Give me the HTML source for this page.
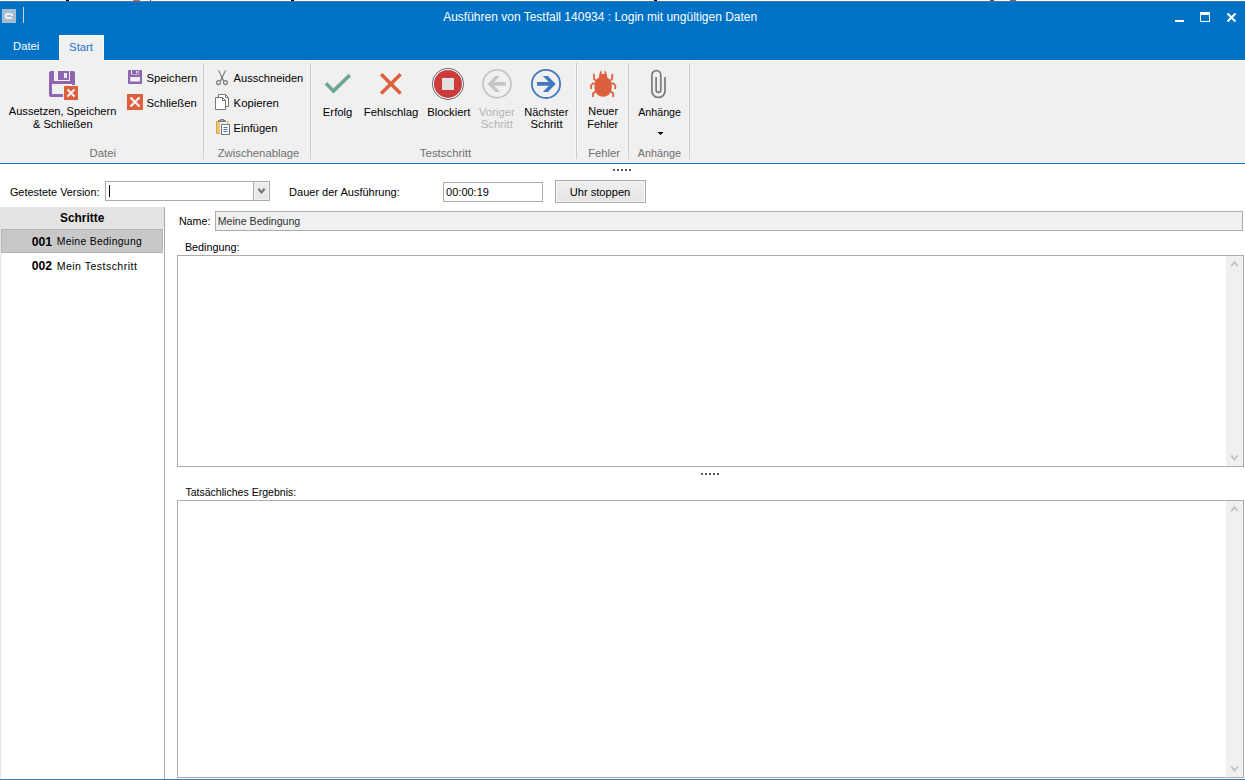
<!DOCTYPE html>
<html><head><meta charset="utf-8">
<style>
html,body{margin:0;padding:0;width:1245px;height:780px;overflow:hidden;background:#fff;}
body{position:relative;font-family:"Liberation Sans",sans-serif;}
.t{position:absolute;white-space:nowrap;}
.r{position:absolute;box-sizing:border-box;}
svg.full{position:absolute;left:0;top:0;overflow:visible;}
</style></head><body>
<div class="r" style="left:0px;top:0px;width:1245px;height:1px;background:#FFFCF6"></div>
<div class="r" style="left:0px;top:1px;width:1245px;height:59px;background:#0072C6"></div>
<div class="r" style="left:0px;top:1px;width:1245px;height:1px;background:#3D77B3"></div>
<div class="r" style="left:66px;top:0px;width:3px;height:1px;background:#000"></div>
<div class="r" style="left:133px;top:0px;width:7px;height:1px;background:#E0603A"></div>
<div class="r" style="left:150px;top:0px;width:1px;height:1px;background:#7030A0"></div>
<div class="r" style="left:291px;top:0px;width:3px;height:1px;background:#000"></div>
<div class="r" style="left:654px;top:0px;width:3px;height:1px;background:#000"></div>
<div class="r" style="left:990px;top:0px;width:4px;height:1px;background:#555"></div>
<div class="r" style="left:1010px;top:0px;width:6px;height:1px;background:#666"></div>
<div class="r" style="left:2px;top:9px;width:14px;height:14px;background:#A8BCD0"></div>
<div class="r" style="left:23px;top:7px;width:1px;height:16px;background:#D2D2D2"></div>
<div class="t" style="left:443.2px;top:8.54px;font-size:12px;line-height:16px;color:#fff;font-weight:400;">Ausführen von Testfall 140934 : Login mit ungültigen Daten</div>
<div class="r" style="left:1175px;top:20px;width:9px;height:2px;background:#fff"></div>
<div class="r" style="left:1200px;top:12px;width:10px;height:10px;border:1px solid #fff;border-top-width:3px"></div>
<div class="t" style="left:13.0px;top:38.08px;font-size:11.3px;line-height:16px;color:#fff;font-weight:400;">Datei</div>
<div class="r" style="left:59px;top:35px;width:45px;height:26px;background:#F0F0F0;border:1px solid #FBF8F3;border-bottom:none"></div>
<div class="t" style="left:69.1px;top:38.78px;font-size:11.3px;line-height:16px;color:#2470CC;font-weight:400;">Start</div>
<div class="r" style="left:0px;top:60px;width:1245px;height:102px;background:#F0F0F0"></div>
<div class="r" style="left:0px;top:60px;width:59px;height:1px;background:#FBF8F3"></div>
<div class="r" style="left:104px;top:60px;width:1141px;height:1px;background:#FBF8F3"></div>
<div class="r" style="left:0px;top:162px;width:1245px;height:1px;background:#FAF6F0"></div>
<div class="r" style="left:0px;top:163px;width:1245px;height:1px;background:#0072C6"></div>
<div class="r" style="left:202px;top:63px;width:3px;height:96px;background:#F5F5F5"></div>
<div class="r" style="left:203px;top:63px;width:1px;height:96px;background:#C9C9C9"></div>
<div class="r" style="left:309px;top:63px;width:3px;height:96px;background:#F5F5F5"></div>
<div class="r" style="left:310px;top:63px;width:1px;height:96px;background:#C9C9C9"></div>
<div class="r" style="left:575px;top:63px;width:3px;height:96px;background:#F5F5F5"></div>
<div class="r" style="left:576px;top:63px;width:1px;height:96px;background:#C9C9C9"></div>
<div class="r" style="left:627px;top:63px;width:3px;height:96px;background:#F5F5F5"></div>
<div class="r" style="left:628px;top:63px;width:1px;height:96px;background:#C9C9C9"></div>
<div class="r" style="left:688px;top:63px;width:3px;height:96px;background:#F5F5F5"></div>
<div class="r" style="left:689px;top:63px;width:1px;height:96px;background:#C9C9C9"></div>
<div class="t" style="left:2.6px;width:120px;text-align:center;top:102.57px;font-size:11.05px;line-height:16px;color:#000;font-weight:400;">Aussetzen, Speichern</div>
<div class="t" style="left:2.8px;width:120px;text-align:center;top:115.87px;font-size:11.05px;line-height:16px;color:#000;font-weight:400;">&amp; Schließen</div>
<div class="t" style="left:146.5px;top:69.88px;font-size:11.3px;line-height:16px;color:#000;font-weight:400;">Speichern</div>
<div class="t" style="left:146.5px;top:94.78px;font-size:11.3px;line-height:16px;color:#000;font-weight:400;">Schließen</div>
<div class="t" style="left:233.6px;top:69.95px;font-size:11.1px;line-height:16px;color:#000;font-weight:400;">Ausschneiden</div>
<div class="t" style="left:233.6px;top:94.78px;font-size:11.3px;line-height:16px;color:#000;font-weight:400;">Kopieren</div>
<div class="t" style="left:233.6px;top:119.95px;font-size:11.1px;line-height:16px;color:#000;font-weight:400;">Einfügen</div>
<div class="t" style="left:277.6px;width:120px;text-align:center;top:103.98px;font-size:11.3px;line-height:16px;color:#000;font-weight:400;">Erfolg</div>
<div class="t" style="left:331.1px;width:120px;text-align:center;top:103.98px;font-size:11.3px;line-height:16px;color:#000;font-weight:400;">Fehlschlag</div>
<div class="t" style="left:388.8px;width:120px;text-align:center;top:103.98px;font-size:11.3px;line-height:16px;color:#000;font-weight:400;">Blockiert</div>
<div class="t" style="left:436.9px;width:120px;text-align:center;top:103.98px;font-size:11.3px;line-height:16px;color:#B4B4B4;font-weight:400;">Voriger</div>
<div class="t" style="left:436.8px;width:120px;text-align:center;top:116.08px;font-size:11.3px;line-height:16px;color:#B4B4B4;font-weight:400;">Schritt</div>
<div class="t" style="left:486.3px;width:120px;text-align:center;top:104.09px;font-size:11.0px;line-height:16px;color:#000;font-weight:400;">Nächster</div>
<div class="t" style="left:486.6px;width:120px;text-align:center;top:116.08px;font-size:11.3px;line-height:16px;color:#000;font-weight:400;">Schritt</div>
<div class="t" style="left:543.2px;width:120px;text-align:center;top:103.02px;font-size:10.9px;line-height:16px;color:#000;font-weight:400;">Neuer</div>
<div class="t" style="left:542.8px;width:120px;text-align:center;top:115.92px;font-size:10.9px;line-height:16px;color:#000;font-weight:400;">Fehler</div>
<div class="t" style="left:599.6px;width:120px;text-align:center;top:104.19px;font-size:10.7px;line-height:16px;color:#000;font-weight:400;">Anhänge</div>
<div class="t" style="left:42.8px;width:120px;text-align:center;top:144.98px;font-size:11.3px;line-height:16px;color:#6F6F6F;font-weight:400;">Datei</div>
<div class="t" style="left:198.5px;width:120px;text-align:center;top:144.98px;font-size:11.3px;line-height:16px;color:#6F6F6F;font-weight:400;">Zwischenablage</div>
<div class="t" style="left:385.5px;width:120px;text-align:center;top:144.95px;font-size:11.4px;line-height:16px;color:#6F6F6F;font-weight:400;">Testschritt</div>
<div class="t" style="left:544.1px;width:120px;text-align:center;top:144.82px;font-size:11.2px;line-height:16px;color:#6F6F6F;font-weight:400;">Fehler</div>
<div class="t" style="left:599.4px;width:120px;text-align:center;top:144.96px;font-size:10.8px;line-height:16px;color:#6F6F6F;font-weight:400;">Anhänge</div>
<div class="r" style="left:613px;top:169px;width:2px;height:2px;background:#555"></div>
<div class="r" style="left:617px;top:169px;width:2px;height:2px;background:#555"></div>
<div class="r" style="left:621px;top:169px;width:2px;height:2px;background:#555"></div>
<div class="r" style="left:625px;top:169px;width:2px;height:2px;background:#555"></div>
<div class="r" style="left:629px;top:169px;width:2px;height:2px;background:#555"></div>
<div class="t" style="left:9.9px;top:184.02px;font-size:10.9px;line-height:16px;color:#000;font-weight:400;">Getestete Version:</div>
<div class="r" style="left:105px;top:181px;width:165px;height:20px;background:#fff;border:1px solid #ABABAB"></div>
<div class="r" style="left:253px;top:181px;width:17px;height:20px;background:linear-gradient(#EDEDED,#E5E5E5);border:1px solid #ABABAB;box-shadow:inset 0 0 0 1px #F1F1F1"></div>
<div class="r" style="left:109px;top:185px;width:1px;height:12px;background:#000"></div>
<div class="t" style="left:289.1px;top:183.89px;font-size:11px;line-height:16px;color:#000;font-weight:400;">Dauer der Ausführung:</div>
<div class="r" style="left:443px;top:182px;width:100px;height:20px;background:#fff;border:1px solid #ABABAB"></div>
<div class="t" style="left:446.1px;top:183.89px;font-size:11px;line-height:16px;color:#000;font-weight:400;">00:00:19</div>
<div class="r" style="left:555px;top:180px;width:91px;height:23px;background:linear-gradient(#EFEFEF,#E5E5E5);border:1px solid #ABABAB;box-shadow:inset 0 0 0 1px #F6F6F6"></div>
<div class="t" style="left:540.0px;width:120px;text-align:center;top:184.15px;font-size:11.1px;line-height:16px;color:#000;font-weight:400;">Uhr stoppen</div>
<div class="r" style="left:0px;top:207px;width:164px;height:22px;background:#E3E3E3"></div>
<div class="r" style="left:0px;top:229px;width:1px;height:550px;background:#E6E6E6"></div>
<div class="r" style="left:164px;top:207px;width:1px;height:572px;background:#A9A9A9"></div>
<div class="t" style="left:22.2px;width:120px;text-align:center;top:209.88px;font-size:11.9px;line-height:16px;color:#000;font-weight:700;">Schritte</div>
<div class="r" style="left:1px;top:229px;width:162px;height:24px;background:#C8C8C8;border:1px solid #B4B4B4"></div>
<div class="t" style="left:31.7px;top:233.77px;font-size:12.2px;line-height:16px;color:#000;font-weight:700;">001</div>
<div class="t" style="left:56.7px;top:233.70px;font-size:10.4px;line-height:16px;color:#000;font-weight:400;letter-spacing:0.3px">Meine Bedingung</div>
<div class="t" style="left:31.7px;top:257.77px;font-size:12.2px;line-height:16px;color:#000;font-weight:700;">002</div>
<div class="t" style="left:56.7px;top:257.63px;font-size:10.6px;line-height:16px;color:#000;font-weight:400;letter-spacing:0.45px">Mein Testschritt</div>
<div class="t" style="left:178.9px;top:212.99px;font-size:10.7px;line-height:16px;color:#000;font-weight:400;">Name:</div>
<div class="r" style="left:215px;top:211px;width:1028px;height:20px;background:#F0F0F0;border:1px solid #ABABAB"></div>
<div class="t" style="left:217.8px;top:213.33px;font-size:10.6px;line-height:16px;color:#333;font-weight:400;">Meine Bedingung</div>
<div class="t" style="left:184.9px;top:239.16px;font-size:10.8px;line-height:16px;color:#000;font-weight:400;">Bedingung:</div>
<div class="r" style="left:177px;top:255px;width:1067px;height:212px;background:#fff;border:1px solid #ABABAB"></div>
<div class="r" style="left:1226px;top:256px;width:17px;height:210px;background:#F0F0F0"></div>
<div class="r" style="left:701px;top:473px;width:2px;height:2px;background:#555"></div>
<div class="r" style="left:705px;top:473px;width:2px;height:2px;background:#555"></div>
<div class="r" style="left:709px;top:473px;width:2px;height:2px;background:#555"></div>
<div class="r" style="left:713px;top:473px;width:2px;height:2px;background:#555"></div>
<div class="r" style="left:717px;top:473px;width:2px;height:2px;background:#555"></div>
<div class="t" style="left:185.4px;top:484.04px;font-size:10.55px;line-height:16px;color:#000;font-weight:400;">Tatsächliches Ergebnis:</div>
<div class="r" style="left:177px;top:500px;width:1067px;height:278px;background:#fff;border:1px solid #ABABAB"></div>
<div class="r" style="left:1226px;top:501px;width:17px;height:276px;background:#F0F0F0"></div>
<div class="r" style="left:0px;top:779px;width:1245px;height:1px;background:#4078B5"></div>
<svg class="full" width="1245" height="780"><path d="M12.3,15.9 Q12.3,14 10.4,14 H7.2 A2.1,2.1 0 0 0 7.2,18.1 H12.1" fill="none" stroke="#fff" stroke-width="1.5"/><path d="M1227.5,13.5 L1235.5,21.5 M1235.5,13.5 L1227.5,21.5" stroke="#fff" stroke-width="2.1"/><path fill="#8F64B1" fill-rule="evenodd" d="M51,71 H73 A2,2 0 0 1 75,73 V95 A2,2 0 0 1 73,97 H51 A2,2 0 0 1 49,95 V73 A2,2 0 0 1 51,71 Z M54,71 H70 V81 H54 Z M52,84 H72 V94 H52 Z"/><rect x="58" y="71" width="11" height="9" fill="#8F64B1"/><rect x="64" y="73" width="3" height="5" fill="#F0F0F0"/><rect x="63.5" y="85.5" width="15" height="15" fill="#DC603E" stroke="#F0F0F0" stroke-width="1"/><path d="M67.5,89.5 L74.5,96.5 M74.5,89.5 L67.5,96.5" stroke="#F2F2F2" stroke-width="2"/><path fill="#8F64B1" fill-rule="evenodd" d="M129,70 H141 A1,1 0 0 1 142,71 V83 A1,1 0 0 1 141,84 H129 A1,1 0 0 1 128,83 V71 A1,1 0 0 1 129,70 Z M131,70 H139 V74.5 H131 Z M130.2,77 H140 V81.5 H130.2 Z"/><rect x="132" y="70" width="6.5" height="4" fill="#8F64B1"/><rect x="136" y="71" width="1.3" height="2.2" fill="#F0F0F0"/><rect x="127" y="94" width="16" height="16" fill="#DC603E"/><path d="M130.5,97.5 L139.5,106.5 M139.5,97.5 L130.5,106.5" stroke="#F2F2F2" stroke-width="2.3"/><g fill="#7C7C7C"><path d="M218,70.4 L218.9,70.1 L224.3,80.8 L223.1,81.2 Z"/><path d="M226.1,70.4 L225.2,70.1 L219.8,80.8 L221,81.2 Z"/></g><g stroke="#7C7C7C" stroke-width="1.1" fill="none"><circle cx="218.5" cy="82.6" r="2"/><circle cx="225.5" cy="82.6" r="2"/></g><g stroke="#777" stroke-width="1" fill="#fff"><path d="M218.5,94.5 H225.5 L228.5,97.5 V106.5 H218.5 Z"/><path d="M215.5,97.5 H222.5 L225.5,100.5 V109.5 H215.5 Z"/><path d="M225.5,94.5 V97.5 H228.5 M222.5,97.5 V100.5 H225.5" fill="none"/></g><rect x="216" y="121" width="4" height="13" fill="#E9C47A"/><path d="M216.5,121 V133.5 H220" stroke="#E5A535" stroke-width="1" fill="none"/><rect x="227" y="121" width="1.5" height="2.5" fill="#E5A535"/><rect x="218" y="120.2" width="8" height="1.8" fill="#777"/><rect x="220.2" y="119" width="3.8" height="2" rx="0.8" fill="#777"/><ellipse cx="222.1" cy="120.6" rx="1" ry="0.45" fill="#E8E8E8"/><rect x="221.5" y="124.5" width="8" height="10" fill="#fff" stroke="#777" stroke-width="1"/><path d="M223.5,127.5 H227.5 M223.5,129.5 H227.5 M223.5,131.5 H227.5" stroke="#3E78C0" stroke-width="1"/><path d="M325.85,83.15 L333.5,90.9 L349.8,75.15" fill="none" stroke="#6FA792" stroke-width="3.6"/><path d="M381.15,74.15 L400.6,93.6 M400.6,74.15 L381.15,93.6" stroke="#DC603E" stroke-width="3.5"/><circle cx="448" cy="83.9" r="15.6" fill="#fff" stroke="#555" stroke-width="0.9"/><circle cx="448" cy="83.9" r="14" fill="#CD3B3B"/><rect x="442" y="78" width="12" height="12" fill="#E1E1E1"/><circle cx="497" cy="83.8" r="14" fill="none" stroke="#C6C6C6" stroke-width="1.8"/><path d="M487.5,84 L495.3,76 H500 L494.2,82 H506 V85.8 H494.2 L500,92 H495.3 Z" fill="#C6C6C6"/><circle cx="546" cy="83.9" r="14.1" fill="none" stroke="#4179BE" stroke-width="1.8"/><path d="M555.7,84 L547.8,76 H542.9 L548.8,82 H537 V85.8 H548.8 L542.9,92 H547.8 Z" fill="#4179BE"/><g fill="#DC603E"><path d="M603.1,76.2 C608.2,76.2 611.8,80.5 611.8,86.8 C611.8,92.8 608,96.8 603.1,96.8 C598.2,96.8 594.4,92.8 594.4,86.8 C594.4,80.5 598,76.2 603.1,76.2 Z"/><path d="M598.9,79 C598.9,74 600,71 601.6,70.2 V74 H604.6 V70.2 C606.2,71 607.3,74 607.3,79 Z"/></g><g stroke="#DC603E" stroke-width="1.8" fill="none"><path d="M594,74 V78.8 L597,81.5 M612.2,74 V78.8 L609.2,81.5 M591,89 V85.5 L593,83.3 H596 M615.3,89 V85.5 L613.3,83.3 H610.3 M593,97 V93.5 L596,90.8 M613.2,97 V93.5 L610.2,90.8"/></g><path d="M656.1,77 V90 A2.35,2.35 0 0 0 660.8,90 V75 A4.45,4.45 0 0 0 651.9,75 V90.9 A6.55,6.55 0 0 0 665,90.9 V77" fill="none" stroke="#7A7A7A" stroke-width="1.7"/><path d="M657.5,132 H663.5 L660.5,135 Z" fill="#000"/><path d="M258.4,188.7 L261.5,192.4 L264.6,188.7" fill="none" stroke="#777" stroke-width="2.2"/><path d="M1231.2,266.3 L1234.5,262.2 L1237.8,266.3" fill="none" stroke="#C2C2C2" stroke-width="1.8"/><path d="M1231.2,455.5 L1234.5,459.6 L1237.8,455.5" fill="none" stroke="#C2C2C2" stroke-width="1.8"/><path d="M1231.2,511.3 L1234.5,507.2 L1237.8,511.3" fill="none" stroke="#C2C2C2" stroke-width="1.8"/><path d="M1231.2,766.5 L1234.5,770.6 L1237.8,766.5" fill="none" stroke="#C2C2C2" stroke-width="1.8"/></svg>
</body></html>
